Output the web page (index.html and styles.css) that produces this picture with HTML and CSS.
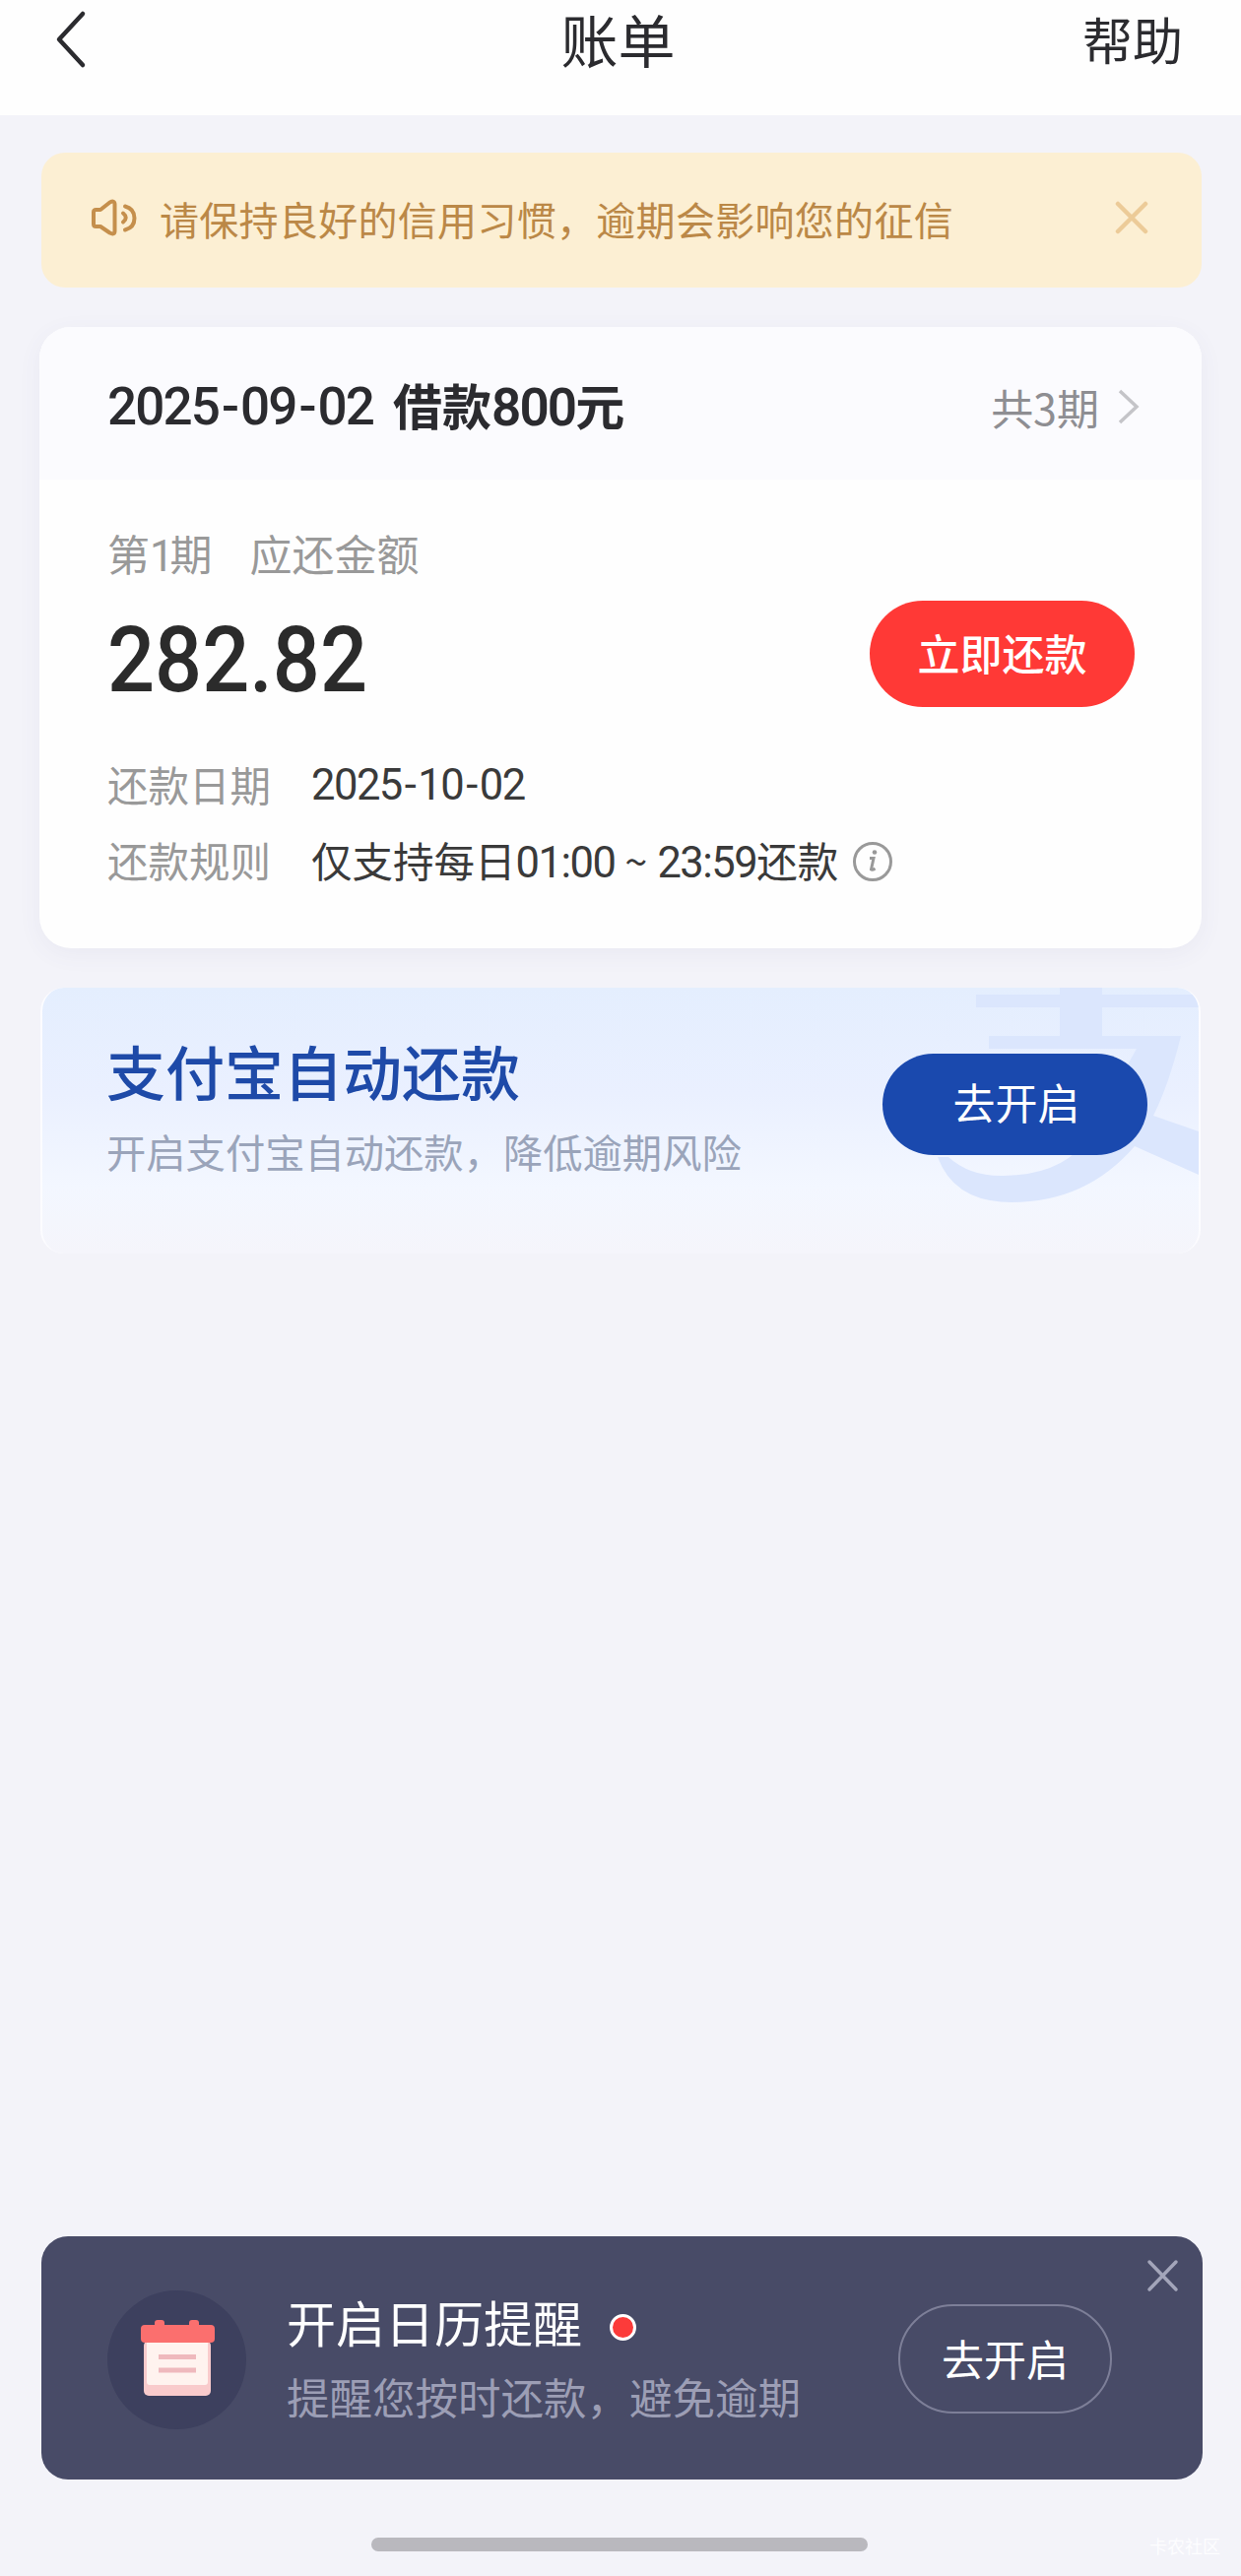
FILE: index.html
```html
<!DOCTYPE html>
<html lang="zh-CN">
<head>
<meta charset="utf-8">
<title>账单</title>
<link rel="stylesheet" href="styles.css">
</head>
<body>
<div class="page">
  <header class="navbar">
    <svg class="back" width="34" height="60" viewBox="0 0 34 60"><path d="M30 4 6 30 30 56"/></svg>
    <h1 class="navbar-title">账单</h1>
    <a class="help">帮助</a>
  </header>

  <main class="content">
    <section class="notice">
      <svg class="speaker" width="50" height="42" viewBox="0 0 50 42">
        <path d="M5 15.500q0-2.500 2.500-2.500H12L21.500 5.500Q26.500 3 26.500 7.500V34.500Q26.500 39 21.500 36.500L12 30H7.500Q5 30 5 27.500Z"/>
        <path d="M35 16.500Q40.500 21 35 25.500"/>
        <path d="M37 9.500Q46.500 12 46.500 21.500T37 33.500"/>
      </svg>
      <span class="notice-text">请保持良好的信用习惯，逾期会影响您的征信</span>
      <svg class="notice-close" width="34" height="34" viewBox="0 0 34 34"><path d="M3 3 31 31M31 3 3 31"/></svg>
    </section>

    <section class="bill">
      <div class="bill-head">
        <h2 class="bill-title"><span class="bill-num">2025<span class="dash">-</span>09<span class="dash">-</span>02</span><span class="bill-loan">借款<span class="bill-num">800</span>元</span></h2>
        <div class="bill-terms">共3期
          <svg width="24" height="40" viewBox="0 0 24 40"><path d="M3 4 20 20 3 36"/></svg>
        </div>
      </div>
      <div class="bill-body">
        <div class="term"><span>第<span class="num one">1</span>期</span><span>应还金额</span></div>
        <div class="amount-row">
          <div class="amount">282.82</div>
          <button class="btn btn-repay">立即还款</button>
        </div>
        <div class="info-row"><span class="label">还款日期</span><span class="value num date">2025<span class="dash">-</span>10<span class="dash">-</span>02</span></div>
        <div class="info-row">
          <span class="label">还款规则</span>
          <span class="value">仅支持每日<span class="num">01:00</span><span class="tilde">~</span><span class="num">23:59</span>还款</span>
          <svg class="info-icon" width="42" height="42" viewBox="0 0 42 42">
            <circle cx="21" cy="21" r="18.500"/>
            <path d="M18 17.500H22L19.500 29Q20.500 30 23.500 28"/>
            <circle class="dot" cx="23" cy="11.500" r="2.300"/>
          </svg>
        </div>
      </div>
    </section>

    <section class="autopay">
      <svg class="autopay-mark" width="268" height="222" viewBox="0 0 268 222">
        <path class="fill" d="M42 7H127V0H170V7H268V20H170V49H250Q238 98 222 130L268 146V190L203 161Q154 218 78 218Q20 218 3 172L14 172Q36 192 70 191Q125 190 150 160L205 62H55V49H127V20H42Z"/>
      </svg>
      <div class="autopay-text">
        <h3 class="autopay-title">支付宝自动还款</h3>
        <p class="autopay-desc">开启支付宝自动还款，降低逾期风险</p>
      </div>
      <button class="btn btn-autopay">去开启</button>
    </section>
  </main>

  <footer class="bottom">
    <section class="reminder">
      <div class="calendar">
        <svg width="80" height="84" viewBox="0 0 80 84">
          <rect x="6" y="24" width="68" height="56" rx="5" fill="#f9cbcc"/>
          <rect x="9" y="20" width="62" height="49" rx="3" fill="#fff3ef"/>
          <rect x="17" y="3" width="10" height="14" rx="3" fill="#fb6f6e"/>
          <rect x="52" y="3" width="10" height="14" rx="3" fill="#fb6f6e"/>
          <rect x="3" y="8" width="75" height="18" rx="4" fill="#fb6f6e"/>
          <path d="M21 40.500H59M21 54H59" stroke="#efb9bd" stroke-width="5"/>
        </svg>
      </div>
      <div class="reminder-text">
        <div class="reminder-title">开启日历提醒<i class="red-dot"></i></div>
        <div class="reminder-desc">提醒您按时还款，避免逾期</div>
      </div>
      <button class="btn btn-remind">去开启</button>
      <svg class="reminder-close" width="33" height="34" viewBox="0 0 33 34"><path d="M3 3 30 31M30 3 3 31"/></svg>
    </section>
    <div class="home-row">
      <div class="home-bar"></div>
      <span class="watermark">卡农社区</span>
    </div>
  </footer>
</div>
</body>
</html>
```

FILE: styles.css
```css
* { box-sizing: border-box; margin: 0; padding: 0; }

body {
  background: #f3f3f9;
  font-family: "Noto Sans CJK SC", sans-serif;
  color: #2b2b2f;
}

svg { display: block; fill: none; flex: none; }
h1, h2, h3 { font-weight: 400; }
.num { font-family: Roboto, "Noto Sans CJK SC", sans-serif; font-size: 43.500px; letter-spacing: -1.500px; }
.dash { padding: 0 3px; }

.page {
  width: 1260px;
  height: 2616px;
  display: flex;
  flex-direction: column;
  overflow: hidden;
}

.navbar {
  height: 117px;
  flex: none;
  padding: 0 59px 0 54px;
  background: #fefefe;
  display: grid;
  grid-template-columns: 1fr auto 1fr;
  align-items: start;
}
.back { margin-top: 10px; stroke: #2b2b2f; stroke-width: 4.500; stroke-linecap: round; stroke-linejoin: round; }
.navbar-title { font-size: 58px; line-height: 84px; margin-top: -3px; }
.help { font-size: 51px; line-height: 78px; justify-self: end; }

.content { flex: 1; padding: 38px 40px 0; }

.notice {
  height: 137px;
  margin: 0 0 0 2px;
  padding: 0 54px 0 48px;
  border-radius: 24px;
  background: #fcefd3;
  display: flex;
  align-items: center;
}
.speaker { margin-top: -6px; stroke: #c58f4c; stroke-width: 4; stroke-linejoin: round; stroke-linecap: round; }
.notice-text { flex: 1; margin: -3px 0 0 22px; font-size: 40px; letter-spacing: .3px; line-height: 134px; color: #bb8847; }
.notice-close { margin-top: -6px; stroke: #eccb98; stroke-width: 4.500; stroke-linecap: round; }

.bill {
  height: 631px;
  margin-top: 40px;
  border-radius: 32px;
  background: #fefefe;
  overflow: hidden;
  box-shadow: 0 6px 24px rgba(90, 90, 130, .06);
}
.bill-head {
  height: 155px;
  padding: 0 62px 0 69px;
  background: #fbfbfe;
  display: flex;
  justify-content: space-between;
}
.bill-title { display: flex; gap: 20px; font-size: 50px; line-height: 156px; font-weight: 700; }
.bill-num { font-family: Roboto, "Noto Sans CJK SC", sans-serif; font-size: 53px; font-weight: 500; letter-spacing: -1.900px; }
.bill-title > .bill-num { padding-top: 3px; }
.bill-loan .bill-num { font-weight: 600; letter-spacing: -1.900px; }
.bill-terms { display: flex; align-items: center; gap: 18px; height: 161px; font-size: 43px; color: #8e8e92; }
.bill-terms svg { stroke: #c4c4c8; stroke-width: 3.500; }

.bill-body { padding: 42px 68px 0 69px; }
.term { display: flex; gap: 38px; font-size: 43px; line-height: 64px; color: #999; }
.one { letter-spacing: -4px; }
.amount-row { height: 108px; margin-top: 12px; display: flex; justify-content: space-between; align-items: center; }
.amount { font-family: Roboto, sans-serif; font-size: 92px; line-height: 108px; font-weight: 500; padding-top: 13px; color: #2b2b2b; transform: scaleX(.92); transform-origin: left; }

.btn {
  border: 0;
  border-radius: 60px;
  font-family: inherit;
  font-size: 43px;
  color: #fff;
}
.btn-repay { width: 269px; height: 108px; padding-bottom: 5px; background: #ff3936; font-weight: 500; }

.info-row { height: 77px; display: flex; align-items: center; font-size: 41.500px; white-space: nowrap; }
.amount-row + .info-row { margin-top: 39px; }
.label { width: 207px; color: #999; }
.value { color: #3a3a3a; }
.date { padding-top: 4px; }
.tilde { margin: 0 10px; }
.info-icon { margin: 4px 0 0 14px; stroke: #999; stroke-width: 3; }
.info-icon .dot { fill: #999; stroke: none; }

.autopay {
  position: relative;
  height: 270px;
  margin: 40px 1px 0 1px;
  padding: 0 52px 0 65px;
  border-left: 2px solid #fcfcff;
  border-right: 2px solid #fcfcff;
  border-radius: 24px;
  background: linear-gradient(#e4eefe, #eaf0ff 40%, #f3f7ff 75%, #f5f5fb);
  overflow: hidden;
  display: flex;
  justify-content: space-between;
}
.autopay-mark { position: absolute; right: 0; top: 0; }
.autopay-mark .fill { fill: #dbe6fd; }
.autopay-text { padding-top: 40px; }
.autopay-title { font-size: 60px; line-height: 88px; font-weight: 500; color: #1e4aa8; }
.autopay-desc { margin-top: 8px; font-size: 40.300px; line-height: 60px; color: #9aa4ba; }
.btn-autopay { position: relative; width: 269px; height: 103px; margin-top: 67px; background: #1a49ae; padding: 0 0 8px 3px; }

.bottom { flex: none; padding: 0 39px 0 42px; }
.reminder {
  position: relative;
  height: 247px;
  padding: 0 92px 0 67px;
  border-radius: 27px;
  background: #484b67;
  display: flex;
}
.calendar { width: 141px; height: 141px; margin-top: 55px; padding-bottom: 4px; border-radius: 50%; background: #3d405e; display: grid; place-items: center; }
.reminder-text { flex: 1; margin-left: 41px; padding-top: 49px; }
.reminder-title { display: flex; align-items: center; font-size: 50px; line-height: 74px; color: #fff; }
.red-dot { width: 27px; height: 27px; margin: 13px 0 0 28px; border: 3px solid #fff; border-radius: 50%; background: #fc3b3a; }
.reminder-desc { margin-top: 8px; font-size: 43.500px; line-height: 64px; color: #9c9eb5; }
.btn-remind { width: 217px; height: 111px; margin-top: 69px; padding-bottom: 4px; border: 2px solid #7d7f98; background: transparent; }
.reminder-close { position: absolute; right: 24px; top: 23px; stroke: #a3a5ba; stroke-width: 3.500; stroke-linecap: round; }

.home-row { height: 98px; padding-right: 5px; display: grid; grid-template-columns: 1fr auto 1fr; }
.home-bar { grid-column: 2; width: 504px; height: 14px; margin-top: 59px; border-radius: 7px; background: #b9b8be; }
.watermark { margin: 55px -23px 0 0; justify-self: end; font-size: 18px; line-height: 24px; color: #fdfdff; }
```
